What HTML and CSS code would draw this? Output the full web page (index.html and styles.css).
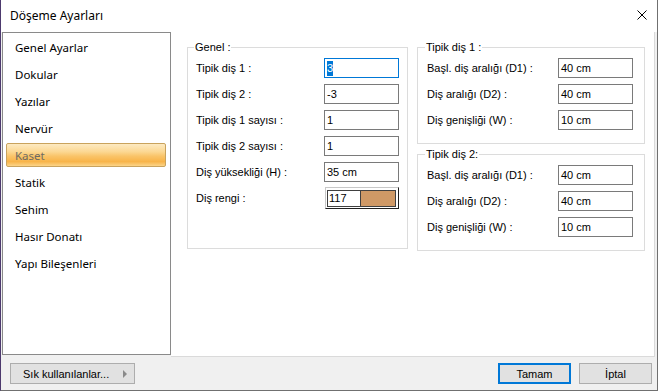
FILE: index.html
```html
<!DOCTYPE html>
<html lang="tr">
<head>
    <meta charset="UTF-8">
    <title>Döşeme Ayarları</title>
    <link rel="stylesheet" href="styles.css">
</head>
<body>
    <div class="window">
        <div class="titlebar">
            <span class="title">Döşeme Ayarları</span>
            <svg class="close-icon" width="10" height="10" viewBox="0 0 10 10">
                <path d="M0.5 0.5 L9.5 9.5 M9.5 0.5 L0.5 9.5" stroke="#000" stroke-width="1" fill="none"/>
            </svg>
        </div>

        <div class="main">
            <ul class="nav">
                <li>Genel Ayarlar</li>
                <li>Dokular</li>
                <li>Yazılar</li>
                <li>Nervür</li>
                <li class="selected">Kaset</li>
                <li>Statik</li>
                <li>Sehim</li>
                <li>Hasır Donatı</li>
                <li>Yapı Bileşenleri</li>
            </ul>

            <div class="content">
                <fieldset class="group group-genel">
                    <legend>Genel :</legend>
                    <div class="row">
                        <label>Tipik diş 1 :</label>
                        <div class="field focused"><span class="sel">3</span></div>
                    </div>
                    <div class="row">
                        <label>Tipik diş 2 :</label>
                        <div class="field">-3</div>
                    </div>
                    <div class="row">
                        <label>Tipik diş 1 sayısı :</label>
                        <div class="field">1</div>
                    </div>
                    <div class="row">
                        <label>Tipik diş 2 sayısı :</label>
                        <div class="field">1</div>
                    </div>
                    <div class="row">
                        <label>Diş yüksekliği (H) :</label>
                        <div class="field">35 cm</div>
                    </div>
                    <div class="row">
                        <label>Diş rengi :</label>
                        <div class="color-picker">
                            <span class="color-num">117</span>
                            <span class="color-swatch"></span>
                        </div>
                    </div>
                </fieldset>

                <div class="side">
                    <fieldset class="group group-side">
                        <legend>Tipik diş 1 :</legend>
                        <div class="row">
                            <label>Başl. diş aralığı (D1) :</label>
                            <div class="field">40 cm</div>
                        </div>
                        <div class="row">
                            <label>Diş aralığı (D2) :</label>
                            <div class="field">40 cm</div>
                        </div>
                        <div class="row">
                            <label>Diş genişliği (W) :</label>
                            <div class="field">10 cm</div>
                        </div>
                    </fieldset>

                    <fieldset class="group group-side">
                        <legend>Tipik diş 2:</legend>
                        <div class="row">
                            <label>Başl. diş aralığı (D1) :</label>
                            <div class="field">40 cm</div>
                        </div>
                        <div class="row">
                            <label>Diş aralığı (D2) :</label>
                            <div class="field">40 cm</div>
                        </div>
                        <div class="row">
                            <label>Diş genişliği (W) :</label>
                            <div class="field">10 cm</div>
                        </div>
                    </fieldset>
                </div>
            </div>
        </div>

        <div class="footer">
            <button class="btn btn-menu">Sık kullanılanlar... <span class="arrow"></span></button>
            <div class="footer-right">
                <button class="btn btn-default">Tamam</button>
                <button class="btn">İptal</button>
            </div>
        </div>
    </div>
</body>
</html>
```

FILE: styles.css
```css
body {
    margin: 0;
    padding: 0;
    font-family: "Liberation Sans", Arial, sans-serif;
    font-size: 11px;
    color: #000;
    background-color: #fff;
}

.window {
    width: 658px;
    height: 391px;
    box-sizing: border-box;
    border: 1px solid #707070;
    border-top: none;
    border-left-color: #4d3a6e;
    background-color: #f0f0f0;
    display: flex;
    flex-direction: column;
}

/* title bar */
.titlebar {
    height: 32px;
    flex: none;
    background-color: #fff;
    display: flex;
    align-items: center;
    justify-content: space-between;
    padding: 0 10px 0 9px;
}

.title {
    font-family: "Noto Sans", sans-serif;
    font-size: 12px;
    margin-top: -1px;
}

.close-icon {
    margin-top: -2px;
}

/* main area */
.main {
    height: 325px;
    flex: none;
    display: flex;
    padding-left: 1px;
}

.nav {
    list-style-type: none;
    margin: 0;
    padding: 2px 4px 0 3px;
    width: 169px;
    height: 323px;
    box-sizing: border-box;
    background-color: #fff;
    border: 1px solid #8a8a8a;
    font-family: "Noto Sans", sans-serif;
    font-size: 11.5px;
}

.nav li {
    height: 24px;
    margin-bottom: 3px;
    padding-left: 8px;
    border: 1px solid transparent;
    border-radius: 2px;
    box-sizing: border-box;
    display: flex;
    align-items: center;
}

.nav li.selected {
    color: #6e6a62;
    border-color: #c9a35d;
    background: linear-gradient(#fdeac2 0%, #fcd893 35%, #fac469 55%, #f8b449 80%, #fbd58a 100%);
}

.content {
    flex: 1;
    margin-right: 2px;
    height: 325px;
    box-sizing: border-box;
    background-color: #fff;
    border-right: 1px solid #dadada;
    border-bottom: 1px solid #dadada;
    padding: 8px 0 0 16px;
    display: flex;
    gap: 9px;
    align-items: flex-start;
}

/* group boxes */
.group {
    margin: 0;
    padding: 4px 0 0 8px;
    border: 1px solid #dcdcdc;
    min-width: 0;
    box-sizing: border-box;
}

.group legend {
    padding: 0 1px;
    margin-left: -2px;
    line-height: 14px;
}

.group-genel {
    width: 221px;
    height: 209px;
}

.side {
    display: flex;
    flex-direction: column;
    gap: 3px;
}

.group-side {
    width: 228px;
    height: 104px;
    padding-left: 9px;
}

.row {
    display: flex;
    align-items: center;
    height: 20px;
    margin-bottom: 6px;
}

.row label {
    width: 128px;
    flex: none;
}

.group-side .row label {
    width: 131px;
}

.field {
    width: 75px;
    height: 20px;
    box-sizing: border-box;
    border: 1px solid #7a7a7a;
    padding-left: 2px;
    line-height: 18px;
    background-color: #fff;
}

.field.focused {
    border-color: #0078d7;
}

.sel {
    background-color: #0078d7;
    color: #fff;
    display: inline-block;
    line-height: 15px;
}

/* colour box */
.color-picker {
    width: 74px;
    height: 22px;
    margin-left: 1px;
    box-sizing: border-box;
    border: 1px solid;
    border-color: #c8c8c8 #202020 #202020 #c8c8c8;
    padding: 2px 2px 1px 1px;
    display: flex;
}

.color-num {
    width: 33px;
    border: 1px solid #404040;
    border-right: none;
    box-sizing: border-box;
    padding-left: 1px;
    line-height: 15px;
}

.color-swatch {
    flex: 1;
    border: 1px solid #404040;
    background-color: #cf9966;
}

/* footer */
.footer {
    flex: 1;
    display: flex;
    justify-content: space-between;
    padding: 6px 5px 0 9px;
}

.footer-right {
    display: flex;
    gap: 8px;
}

.btn {
    height: 21px;
    box-sizing: border-box;
    background-color: #e1e1e1;
    border: 1px solid #adadad;
    font-family: "Liberation Sans", Arial, sans-serif;
    font-size: 11px;
    color: #000;
    padding: 0;
    width: 73px;
}

.btn-default {
    border: 2px solid #0078d7;
}

.btn-menu {
    width: 125px;
    text-align: left;
    padding-left: 12px;
    display: flex;
    align-items: center;
}

.arrow {
    margin-left: 14px;
    width: 0;
    height: 0;
    border-top: 4px solid transparent;
    border-bottom: 4px solid transparent;
    border-left: 4px solid #8a8a8a;
}
```
